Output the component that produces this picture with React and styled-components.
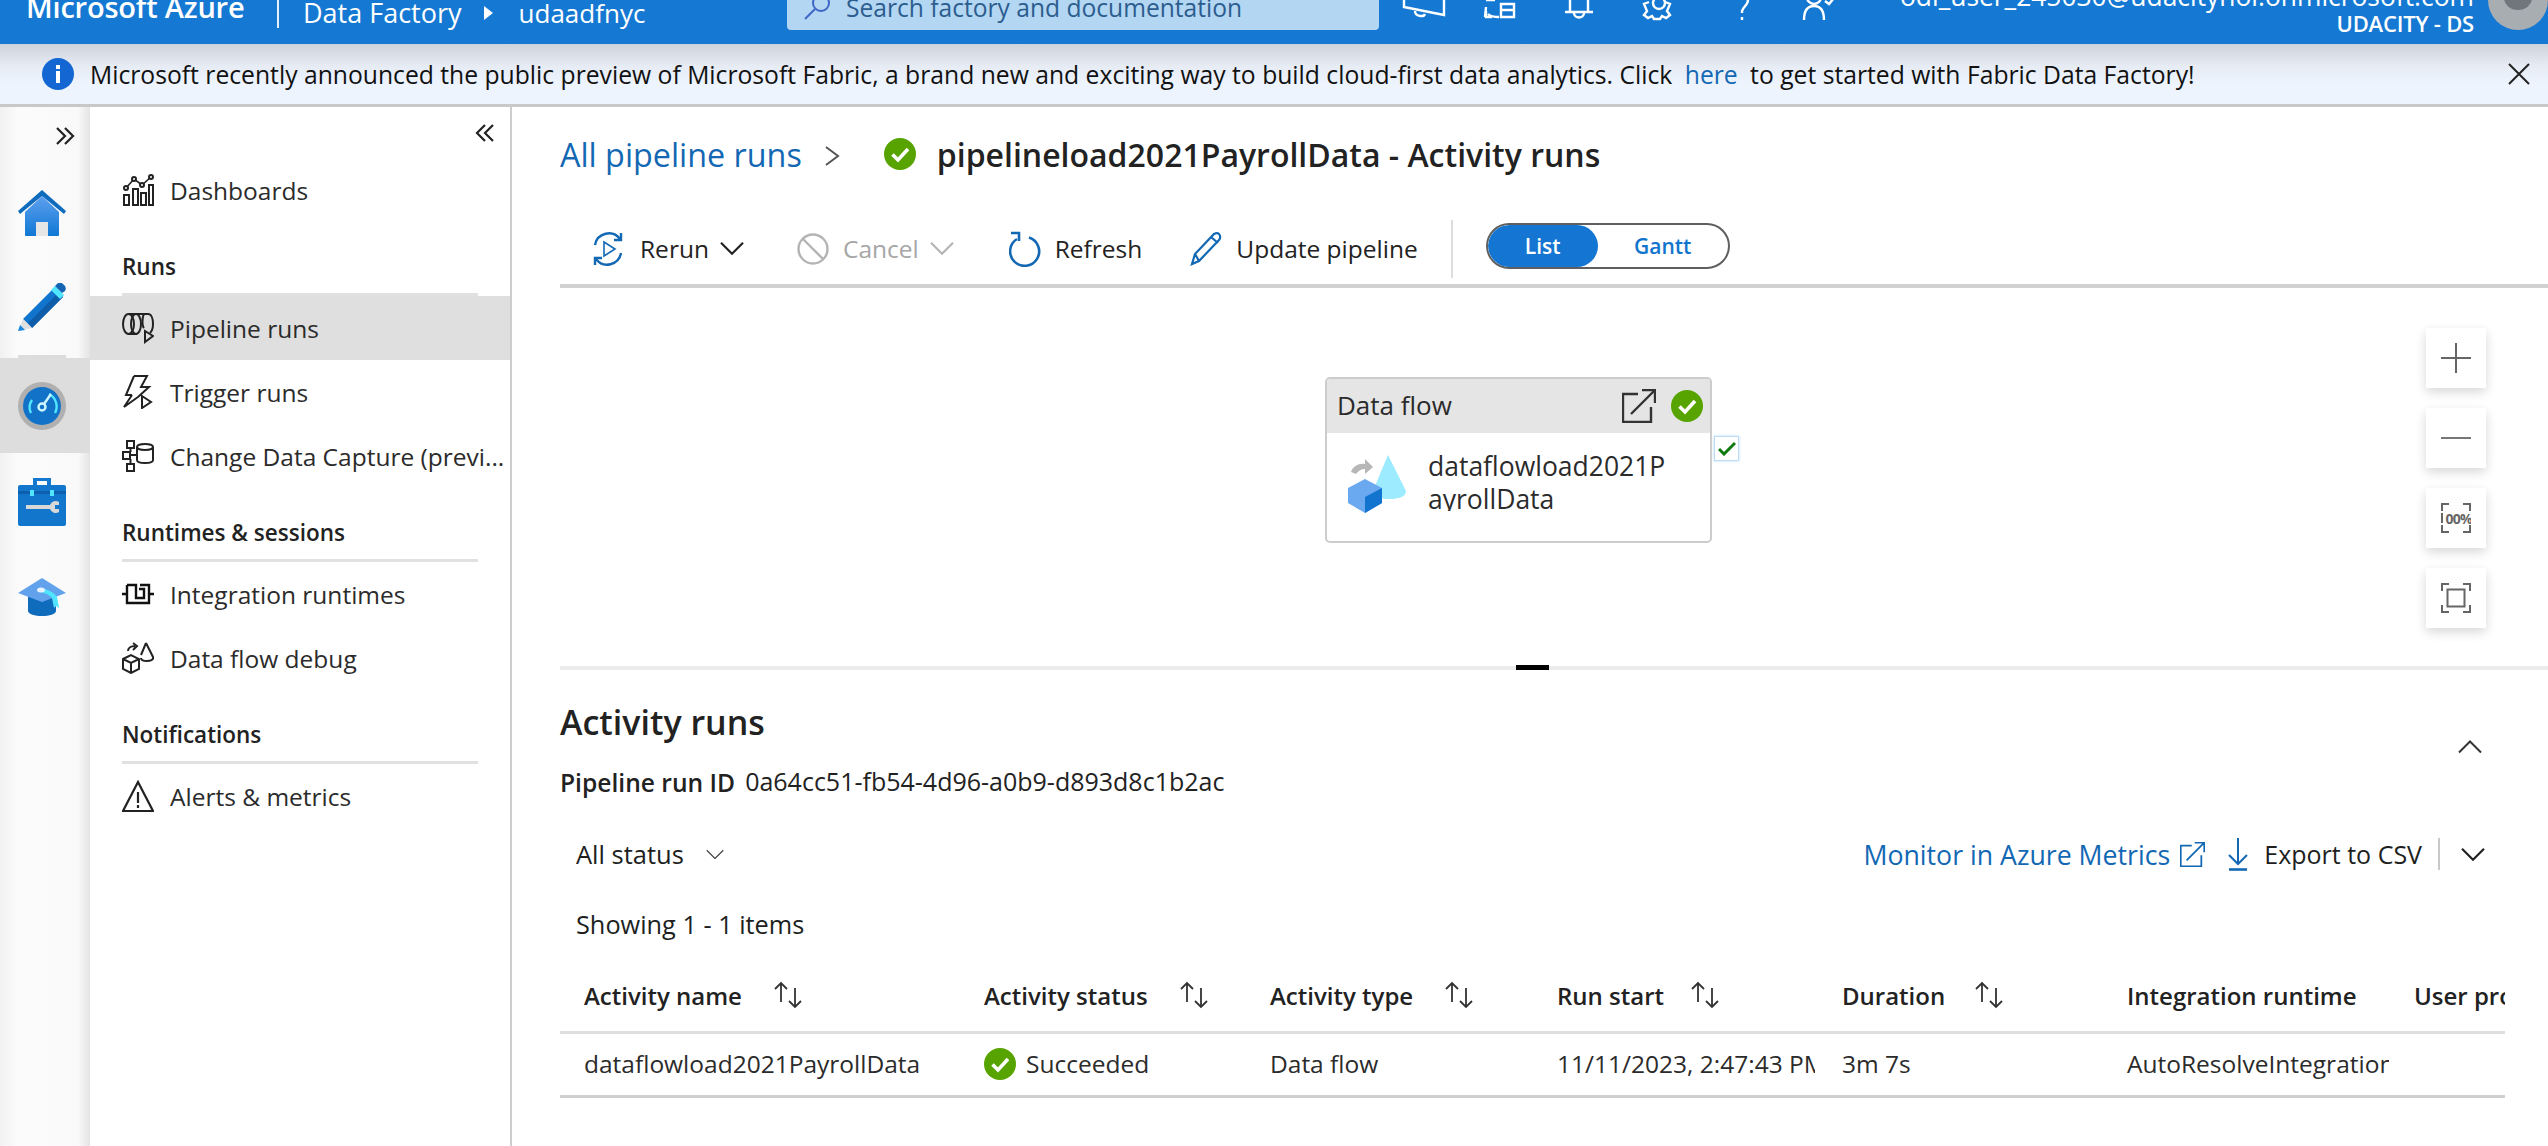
import React from 'react';
import styled, { createGlobalStyle } from 'styled-components';

const GlobalStyle = createGlobalStyle`
    html, body {
        margin: 0;
        padding: 0;
        background: #fff;
    }
    * {
        box-sizing: border-box;
    }
    body {
        font-family: 'Open Sans', 'Noto Sans', sans-serif;
        color: #201f1e;
    }
`;

const Page = styled.div`
    width: 2548px;
    height: 1146px;
    display: flex;
    flex-direction: column;
    overflow: hidden;
`;

const Header = styled.header`
    height: 44px;
    flex: none;
    background: #1579d3;
    overflow: hidden;
    color: #fff;
`;

const HeaderRow = styled.div`
    height: 60px;
    margin-top: -30px;
    display: flex;
    align-items: center;
`;

const Brand = styled.div`
    width: 277px;
    padding: 12px 0 0 26px;
    font-size: 29px;
    font-weight: 600;
    letter-spacing: -0.2px;
    white-space: nowrap;
`;

const HeaderCrumb = styled.div`
    height: 56px;
    width: 510px;
    border-left: 2px solid #e6f0fa;
    padding: 26px 0 0 24px;
    display: flex;
    align-items: center;
    font-size: 27px;
    line-height: 30px;
    white-space: nowrap;
`;

const CrumbArrow = styled.span`
    width: 0;
    height: 0;
    margin: 0 26px 0 22px;
    border-left: 9px solid #fff;
    border-top: 7px solid transparent;
    border-bottom: 7px solid transparent;
`;

const FactoryName = styled.span`
    font-size: 26px;
`;

const SearchBox = styled.div`
    width: 592px;
    height: 60px;
    background: #b3d6f2;
    border-radius: 0 0 4px 4px;
    padding: 14px 0 0 16px;
    display: flex;
    align-items: center;
    gap: 15px;
    color: #2c5d8f;
    font-size: 24.6px;
    white-space: nowrap;
`;

const HeaderIcons = styled.div`
    display: flex;
    align-items: center;
    margin-left: 24px;
    width: 480px;
`;

const HeaderIcon = styled.svg`
    flex: none;
    width: ${(p) => p.$w}px;
    height: 40px;
    margin-right: ${(p) => p.$gap}px;
    overflow: visible;
`;

const UserBlock = styled.div`
    flex: 1;
    height: 60px;
    display: flex;
    flex-direction: column;
    align-items: flex-end;
    font-size: 26.4px;
    line-height: 30px;
    padding-top: 11px;
    white-space: nowrap;
`;

const Tenant = styled.div`
    font-size: 22px;
    font-weight: 600;
    line-height: 24px;
    letter-spacing: -0.2px;
`;

const Avatar = styled.div`
    flex: none;
    width: 60px;
    height: 60px;
    margin-left: 14px;
    border-radius: 50%;
    background: #a8adb2;
    position: relative;
    overflow: hidden;

    &::before {
        content: '';
        position: absolute;
        left: 16px;
        top: 16px;
        width: 28px;
        height: 24px;
        border-radius: 50%;
        background: #70767b;
    }
`;

const Banner = styled.div`
    height: 63px;
    flex: none;
    border-bottom: 3px solid #c8c8c8;
    background: linear-gradient(#ced2db 0, #e6ebf4 22px, #eef4fe 40px);
    display: flex;
    align-items: center;
    padding: 0 0 0 42px;
    font-size: 24.7px;
    color: #111;
    white-space: nowrap;
`;

const BannerText = styled.div`
    margin-left: 16px;
    flex: 1;
`;

const BannerLink = styled.span`
    color: #1368b4;
    margin: 0 6px;
`;

const CloseIcon = styled.svg`
    margin-right: 18px;
`;

const Body = styled.div`
    flex: 1;
    display: flex;
    min-height: 0;
`;

const Rail = styled.nav`
    width: 90px;
    flex: none;
    background: linear-gradient(90deg, #f1f1f1 0, #fbfbfb 18px, #f9f9f9 78px, #e4e4e4 90px);
    display: flex;
    flex-direction: column;
`;

const RailToggle = styled.div`
    height: 58px;
    display: flex;
    align-items: center;
    justify-content: flex-end;
    padding-right: 15px;
`;

const RailItem = styled.div`
    height: ${(p) => p.$h || 95}px;
    padding-right: 6px;
    display: flex;
    align-items: center;
    justify-content: center;
    background: ${(p) => (p.$active ? '#dddddd' : 'transparent')};
`;

const RailRule = styled.div`
    height: 3px;
    margin: 0 24px 0 18px;
    background: #dcdcdc;
`;

const Side = styled.aside`
    width: 422px;
    flex: none;
    border-right: 2px solid #cdcdcd;
    display: flex;
    flex-direction: column;
`;

const SideCollapse = styled.div`
    height: 51px;
    display: flex;
    align-items: center;
    justify-content: flex-end;
    padding-right: 15px;
`;

const SideRow = styled.div`
    height: 64px;
    display: flex;
    align-items: center;
    padding-left: 32px;
    gap: 16px;
    font-size: 24.5px;
    color: #2b2b2b;
    white-space: nowrap;
    overflow: hidden;
    background: ${(p) => (p.$active ? '#dfdfdf' : 'transparent')};
`;

const SideHead = styled.div`
    height: 74px;
    flex: none;
    margin: 0 32px;
    width: 356px;
    padding: 0 0 11px 0;
    border-bottom: 3px solid #e1e1e1;
    display: flex;
    align-items: flex-end;
    font-size: 22.5px;
    font-weight: 600;
    color: #222;
`;

const Main = styled.main`
    flex: 1;
    min-width: 0;
    padding-left: 48px;
    display: flex;
    flex-direction: column;
`;

const Crumbs = styled.div`
    height: 110px;
    flex: none;
    padding-bottom: 16px;
    display: flex;
    align-items: center;
    font-size: 32.3px;
    white-space: nowrap;
`;

const CrumbLink = styled.span`
    color: #1368b4;
`;

const CrumbSep = styled.svg`
    width: 18px;
    height: 22px;
    margin: 4px 43px 0 21px;
`;

const CrumbTitle = styled.span`
    margin-left: 21px;
    font-size: 32px;
    font-weight: 600;
    color: #222;
`;

const Toolbar = styled.div`
    height: 71px;
    flex: none;
    border-bottom: 4px solid #d2d2d2;
    display: flex;
    align-items: center;
    padding: 0 0 4px 30px;
    font-size: 24.5px;
    white-space: nowrap;
`;

const Tool = styled.div`
    display: flex;
    align-items: center;
    gap: 14px;
    margin-right: ${(p) => p.$gap}px;
    color: ${(p) => (p.$disabled ? '#a6a6a6' : '#222')};

    svg:last-child:not(:first-child) {
        margin-left: -3px;
    }
`;

const ToolRule = styled.div`
    width: 2px;
    height: 58px;
    background: #dedede;
    margin-right: 33px;
`;

const Toggle = styled.div`
    width: 244px;
    height: 46px;
    margin-top: -6px;
    border: 2px solid #5f5f5f;
    border-radius: 23px;
    display: flex;
    font-size: 21px;
    font-weight: 600;
    overflow: hidden;
`;

const ToggleOption = styled.div`
    width: ${(p) => p.$w}px;
    display: flex;
    align-items: center;
    justify-content: center;
    color: ${(p) => (p.$active ? '#fff' : '#1275cd')};
    background: ${(p) => (p.$active ? '#1476d2' : 'transparent')};
    border-radius: 23px;
`;

const Canvas = styled.div`
    height: 378px;
    flex: none;
    position: relative;
`;

const Node = styled.div`
    position: absolute;
    left: 765px;
    top: 89px;
    width: 387px;
    height: 166px;
    border: 2px solid #cccccc;
    border-radius: 5px;
    display: flex;
    flex-direction: column;
    overflow: hidden;
`;

const NodeHead = styled.div`
    height: 54px;
    flex: none;
    background: #e5e5e5;
    display: flex;
    align-items: center;
    gap: 15px;
    padding: 0 7px 0 10px;
    font-size: 26px;
    color: #2b2b2b;
`;

const NodeName = styled.div`
    flex: 1;
    margin-top: -2px;
`;

const NodeBody = styled.div`
    display: flex;
    padding: 22px 0 0 20px;
`;

const NodeText = styled.div`
    margin: -5px 0 0 21px;
    width: 240px;
    height: 61px;
    overflow: hidden;
    font-size: 26.5px;
    line-height: 33px;
    word-break: break-all;
    color: #2b2b2b;
`;

const NodeCheck = styled.div`
    position: absolute;
    left: 1154px;
    top: 148px;
    width: 25px;
    height: 25px;
    background: #fff;
    border: 1px solid #bcdcf5;
    box-shadow: 0 0 3px #bcdcf5;
    display: flex;
    align-items: center;
    justify-content: center;
`;

const ZoomStack = styled.div`
    position: absolute;
    top: 40px;
    right: 62px;
    display: flex;
    flex-direction: column;
    gap: 20px;
`;

const ZoomButton = styled.div`
    width: 60px;
    height: 60px;
    background: #fff;
    box-shadow: 0 4px 10px rgba(0, 0, 0, 0.16);
    display: flex;
    align-items: center;
    justify-content: center;
`;

const Splitter = styled.div`
    height: 4px;
    flex: none;
    background: #ececec;
    position: relative;
`;

const SplitHandle = styled.div`
    position: absolute;
    left: 956px;
    top: -1px;
    width: 33px;
    height: 5px;
    background: #000;
`;

const TitleRow = styled.div`
    height: 85px;
    flex: none;
    display: flex;
    align-items: flex-end;
    justify-content: space-between;
    padding-right: 66px;
`;

const SectionTitle = styled.h2`
    margin: 0 0 11px;
    font-size: 34px;
    line-height: 44px;
    font-weight: 600;
    color: #222;
`;

const CollapseUp = styled.svg`
    margin-bottom: 1px;
`;

const RunIdRow = styled.div`
    height: 54px;
    flex: none;
    display: flex;
    align-items: center;
    font-size: 24.6px;
    color: #222;
`;

const RunIdLabel = styled.span`
    font-weight: 600;
    margin-right: 10px;
`;

const RunIdValue = styled.span`
    font-size: 25px;
    margin-top: -3px;
`;

const FilterRow = styled.div`
    height: 70px;
    margin-top: 10px;
    flex: none;
    display: flex;
    align-items: center;
    padding: 0 63px 0 16px;
    font-size: 25.5px;
`;

const StatusFilter = styled.div`
    display: flex;
    align-items: center;
    gap: 22px;
    flex: 1;
`;

const MetricsLink = styled.div`
    display: flex;
    align-items: center;
    gap: 10px;
    color: #1368b4;
    font-size: 26.7px;
    margin-right: 23px;
`;

const ExportButton = styled.div`
    display: flex;
    align-items: center;
    gap: 16px;
    font-size: 25px;
`;

const FilterRule = styled.div`
    width: 2px;
    height: 32px;
    background: #c8c8c8;
    margin: 0 21px 0 16px;
`;

const ShowingRow = styled.div`
    height: 70px;
    flex: none;
    display: flex;
    align-items: center;
    padding-left: 16px;
    font-size: 25.3px;
`;

const Table = styled.div`
    width: 1945px;
    flex: none;
    font-size: 24.5px;
`;

const TableHead = styled.div`
    height: 75px;
    display: grid;
    grid-template-columns: 400px 286px 287px 285px 285px 287px 115px;
    align-items: center;
    border-bottom: 3px solid #dedede;
    font-size: 24px;
    font-weight: 600;
    color: #222;
`;

const TableRow = styled.div`
    height: 64px;
    padding-bottom: 2px;
    display: grid;
    grid-template-columns: 400px 286px 287px 285px 285px 287px 115px;
    align-items: center;
    border-bottom: 3px solid #cfcfcf;
`;

const HeadCell = styled.div`
    display: flex;
    align-items: center;
    gap: ${(p) => p.$gap || 31}px;
    padding-left: 24px;
    overflow: hidden;
    white-space: nowrap;
`;

const Cell = styled.div`
    display: flex;
    align-items: center;
    gap: 10px;
    padding-left: 24px;
    overflow: hidden;
    white-space: nowrap;
    color: #2b2b2b;
    clip-path: inset(0 ${(p) => p.$clip || 0}px 0 0);
`;

const Chevron = ({ size = 24, color = '#222', dir = 'down', w = 2.2 }) => (
    <svg width={size} height={size * 0.6} viewBox="0 0 24 14" fill="none">
        <path
            d={dir === 'down' ? 'M1 1.5 12 12.5 23 1.5' : 'M1 12.5 12 1.5 23 12.5'}
            stroke={color}
            strokeWidth={w}
        />
    </svg>
);

const CheckCircle = ({ size = 32 }) => (
    <svg width={size} height={size} viewBox="0 0 32 32">
        <circle cx="16" cy="16" r="16" fill="#57a300" />
        <path d="M8.5 16.5 14 22 24 11" fill="none" stroke="#fff" strokeWidth="3.6" />
    </svg>
);

const SortIcon = () => (
    <svg width="30" height="30" viewBox="0 0 30 30" fill="none" stroke="#333" strokeWidth="1.8">
        <path d="M8 22V3M2 9l6-6 6 6M22 8v19M16 21l6 6 6-6" />
    </svg>
);

const DoubleChevron = ({ dir }) => (
    <svg width="20" height="20" viewBox="0 0 20 20" fill="none" stroke="#222" strokeWidth="2.2">
        <path d={dir === 'right' ? 'M2 2l8 8-8 8M10 2l8 8-8 8' : 'M18 2l-8 8 8 8M10 2l-8 8 8 8'} />
    </svg>
);

const ExternalIcon = ({ size, color, w }) => (
    <svg width={size} height={size} viewBox="0 0 34 34" fill="none" stroke={color} strokeWidth={w}>
        <path d="M16 5H1v28h28V18M9 25 32 2M20 1h13v13" />
    </svg>
);

const DashboardsIcon = () => (
    <svg width="32" height="32" viewBox="0 0 32 32" fill="none" stroke="#222" strokeWidth="2">
        <path d="M2 21h5v10H2zM11 15h5v16h-5zM19 19h5v12h-5zM27 11h4v20h-4z" />
        <path d="M4 14 12 5l8 6 9-8" strokeWidth="1.6" />
        <circle cx="4" cy="14" r="2" fill="#fff" />
        <circle cx="12" cy="5" r="2" fill="#fff" />
        <circle cx="20" cy="11" r="2" fill="#fff" />
        <circle cx="29" cy="3" r="2" fill="#fff" />
    </svg>
);

const PipelineIcon = () => (
    <svg width="32" height="32" viewBox="0 0 32 32" fill="none" stroke="#222" strokeWidth="2">
        <ellipse cx="6.5" cy="12" rx="5.5" ry="10" />
        <path d="M7 2h19c3 0 5 4 5 10 0 4-1 7-3 9M7 22h8" />
        <ellipse cx="14" cy="12" rx="5" ry="10" />
        <path d="M22 2c-2 3-2 12 0 14M23 19l8 5-8 6z" />
    </svg>
);

const TriggerIcon = () => (
    <svg width="32" height="34" viewBox="0 0 32 34" fill="none" stroke="#222" strokeWidth="2">
        <path d="M12 1h13l-6 11h8L16 22M10 20H4L12 1M10 20 2 32 16 22" />
        <path d="M20 21l9 6-9 6z" />
    </svg>
);

const CaptureIcon = () => (
    <svg width="32" height="32" viewBox="0 0 32 32" fill="none" stroke="#222" strokeWidth="2">
        <path d="M5 1h7v7H5zM1 12h7v7H1zM5 24h7v7H5zM8 15h8M8.500 8v4M8.500 19v5" />
        <ellipse cx="23" cy="7" rx="8" ry="3" />
        <path d="M15 7v13c0 2 3 3 8 3s8-1 8-3V7" />
    </svg>
);

const IntegrationIcon = () => (
    <svg width="32" height="22" viewBox="0 0 32 22" fill="none" stroke="#111" strokeWidth="2.4">
        <path d="M0 11h5M27 11h5M5 2h9v13h8V6h-5M18 2h9v18H5V2" />
    </svg>
);

const DebugIcon = () => (
    <svg width="32" height="32" viewBox="0 0 32 32" fill="none" stroke="#222" strokeWidth="2">
        <path d="M1 17l8-4 8 4v10l-8 4-8-4zM1 17l8 4 8-4M9 21v10" />
        <path d="M6 9c0-3 3-5 7-5M11 1l4 3-4 4" />
        <path d="M24 1l7 14c1 3-3 4-6 4s-6-1-6-3" />
        <path d="M24 1l-5 12" />
    </svg>
);

const AlertIcon = () => (
    <svg width="32" height="32" viewBox="0 0 32 32" fill="none" stroke="#222" strokeWidth="2.2">
        <path d="M16 2 1 31h30z" />
        <path d="M16 12v11M16 25v3" />
    </svg>
);

const HomeIcon = () => (
    <svg width="48" height="46" viewBox="0 0 48 46">
        <defs>
            <linearGradient id="homeFill" x1="0" y1="0" x2="0" y2="1">
                <stop offset="0" stopColor="#5ea0ef" />
                <stop offset="1" stopColor="#0f78d4" />
            </linearGradient>
        </defs>
        <path d="M7 22 24 6l17 16v23a1 1 0 0 1-1 1H8a1 1 0 0 1-1-1z" fill="url(#homeFill)" />
        <path d="M0 21 24 0l24 21-2 3L24 6 2 24z" fill="#0f6cbd" />
        <path d="M18 32h12v14H18z" fill="#e6e6e6" />
    </svg>
);

const PencilIcon = () => (
    <svg width="48" height="50" viewBox="0 0 48 50">
        <path d="M5 36 36 5l9 9-31 31z" fill="#1275cd" />
        <path d="M10 40 41 9l4 5-31 31z" fill="#0e5da8" />
        <path d="M33 7l4-4 9 9-4 4z" fill="#50e6ff" />
        <path d="M37 3l3-3c2-1 3-1 5 1l2 2c1 2 1 3 0 5l-3 2z" fill="#1464b4" />
        <path d="M5 36 14 45 0 48z" fill="#e0e0e0" />
        <path d="M2 42 7 47 0 48z" fill="#1b86e0" />
    </svg>
);

const MonitorIcon = () => (
    <svg width="48" height="48" viewBox="0 0 48 48" fill="none">
        <circle cx="24" cy="24" r="24" fill="#b0b0b0" />
        <circle cx="24" cy="24" r="19" fill="#1272c7" />
        <path d="M13 31a13 13 0 0 1 1-13M31 12a14 14 0 0 1 6 19" stroke="#50e6ff" strokeWidth="2.4" />
        <circle cx="24" cy="25" r="3.500" stroke="#cdf6ff" strokeWidth="2.4" />
        <path d="M26 22l7-10" stroke="#cdf6ff" strokeWidth="2.4" />
    </svg>
);

const ToolboxIcon = () => (
    <svg width="48" height="49" viewBox="0 0 48 49">
        <path d="M15 1h18v8h-4V4H19v5h-4z" fill="#1478d0" />
        <path d="M0 10a2 2 0 0 1 2-2h44a2 2 0 0 1 2 2v37a2 2 0 0 1-2 2H2a2 2 0 0 1-2-2z" fill="#1276cc" />
        <path d="M0 14h48v3H0z" fill="#0e5fae" />
        <path d="M12 13h4v6h-4zM32 13h4v6h-4z" fill="#50e6ff" />
        <path d="M8 28h24a6 6 0 0 1 9-3v3h-4v4h4v3a6 6 0 0 1-9-3H8z" fill="#d8d8d8" />
    </svg>
);

const CapIcon = () => (
    <svg width="48" height="38" viewBox="0 0 48 38">
        <path d="M10 16v17c0 3 7 5 14 5s14-2 14-5V16z" fill="#0f6cbd" />
        <path d="M0 15 24 0l24 15-24 9z" fill="#62a2ec" />
        <path d="M20 11c5-2 15 2 19 8l2 11-3-2-2 2-2-10c-3-4-10-6-14-6z" fill="#50e6ff" />
        <ellipse cx="23" cy="12" rx="4" ry="2.500" fill="#e6f3ff" />
    </svg>
);

const RerunIcon = () => (
    <svg width="36" height="36" viewBox="0 0 36 36" fill="none" stroke="#1368b4" strokeWidth="2.4">
        <path d="M5 14a14 14 0 0 1 25-6M31 22a14 14 0 0 1-25 6" />
        <path d="M31 2v7h-7M5 34v-7h7" />
        <path d="M14 11l11 7-11 7z" strokeWidth="1.600" />
    </svg>
);

const CancelIcon = () => (
    <svg width="32" height="32" viewBox="0 0 32 32" fill="none" stroke="#b4b4b4" strokeWidth="2.4">
        <circle cx="16" cy="16" r="14.500" />
        <path d="M6 6l20 20" />
    </svg>
);

const RefreshIcon = () => (
    <svg width="32" height="36" viewBox="0 0 32 36" fill="none" stroke="#1368b4" strokeWidth="2.6">
        <path d="M20 6.500A14.500 14.500 0 1 1 8 8" />
        <path d="M2 2h8v8" />
    </svg>
);

const EditIcon = () => (
    <svg width="32" height="34" viewBox="0 0 32 34" fill="none" stroke="#1368b4" strokeWidth="2.2">
        <path d="M2 32l3-10L24 2c2-1 4-1 5 0s2 4 0 6L9 29zM5 22l4 7M21 5l7 6" />
    </svg>
);

const SearchIcon = () => (
    <svg width="28" height="28" viewBox="0 0 28 28" fill="none" stroke="#3f66c4" strokeWidth="2">
        <circle cx="18" cy="10" r="8" />
        <path d="M12 16 2 26" />
    </svg>
);

const DataFlowIcon = () => (
    <svg width="60" height="58" viewBox="0 0 60 58">
        <path d="M41 0 59 36c0 6-8 8-16 8s-16-2-18-6z" fill="#9cebff" />
        <path d="M4 17c2-6 8-9 14-8V4l8 8-8 7v-5c-4 0-7 2-9 5z" fill="#b7b7b7" />
        <path d="M1 33 18 24l17 9v15L18 58 1 48z" fill="#6aa8f0" />
        <path d="M18 42 35 33v15L18 58z" fill="#1274cf" />
    </svg>
);

const DownloadIcon = () => (
    <svg width="20" height="33" viewBox="0 0 20 33" fill="none" stroke="#1368b4" strokeWidth="2">
        <path d="M10 0v26M1 17l9 9 9-9" />
        <path d="M1 31.500h18" strokeWidth="2.600" />
    </svg>
);

const columns = [
    { name: 'Activity name', sort: true },
    { name: 'Activity status', sort: true },
    { name: 'Activity type', sort: true },
    { name: 'Run start', sort: true, gap: 26 },
    { name: 'Duration', sort: true, gap: 29 },
    { name: 'Integration runtime' },
    { name: 'User properties' },
];

export default function App() {
    return (
        <Page>
            <GlobalStyle />
            <Header>
                <HeaderRow>
                    <Brand>Microsoft Azure</Brand>
                    <HeaderCrumb>
                        Data Factory
                        <CrumbArrow />
                        <FactoryName>udaadfnyc</FactoryName>
                    </HeaderCrumb>
                    <SearchBox>
                        <SearchIcon />
                        Search factory and documentation
                    </SearchBox>
                    <HeaderIcons>
                        <HeaderIcon $w={42} $gap={38} viewBox="0 0 42 40" fill="none" stroke="#fff" strokeWidth="2.4">
                            <path d="M1 27l40 8V5L1 13zM12 31c0 6 9 6 10 3" />
                        </HeaderIcon>
                        <HeaderIcon $w={32} $gap={50} viewBox="0 0 32 40" fill="none" stroke="#fff" strokeWidth="2.4">
                            <path d="M3 20h9M3 27l-1 10M18 24h13v13H18zM18 30h13M16 37c-4 0-8 0-11-3M3 31v6h6" />
                        </HeaderIcon>
                        <HeaderIcon $w={28} $gap={50} viewBox="0 0 28 40" fill="none" stroke="#fff" strokeWidth="2.4">
                            <path d="M5 10v22H0h28H23V10M9 33c0 6 10 6 10 0" />
                        </HeaderIcon>
                        <HeaderIcon $w={32} $gap={62} viewBox="0 0 32 40" fill="none" stroke="#fff" strokeWidth="2.4">
                            <path d="M6 22l-5 2 3 7-3 4 4 3 4-2 2 3h6l2-3 4 2 4-3-3-4 3-7-5-2" />
                            <circle cx="16" cy="23" r="6" />
                        </HeaderIcon>
                        <HeaderIcon $w={12} $gap={54} viewBox="0 0 12 40" fill="none" stroke="#fff" strokeWidth="2.4">
                            <path d="M11 20c0 5-5 7-6 11v2M5 37v3" />
                        </HeaderIcon>
                        <HeaderIcon $w={32} $gap={0} viewBox="0 0 32 40" fill="none" stroke="#fff" strokeWidth="2.4">
                            <circle cx="11" cy="17" r="7" />
                            <path d="M1 40c0-10 4-14 10-14s10 4 10 14M22 21l4 3 5-6" />
                        </HeaderIcon>
                    </HeaderIcons>
                    <UserBlock>
                        <div>odl_user_245030@udacityhol.onmicrosoft.com</div>
                        <Tenant>UDACITY - DS</Tenant>
                    </UserBlock>
                    <Avatar />
                </HeaderRow>
            </Header>
            <Banner>
                <svg width="32" height="32" viewBox="0 0 32 32">
                    <circle cx="16" cy="16" r="16" fill="#1466d2" />
                    <path d="M14 13h4v12h-4zM14 7h4v4h-4z" fill="#fff" />
                </svg>
                <BannerText>
                    Microsoft recently announced the public preview of Microsoft Fabric, a brand new and
                    exciting way to build cloud-first data analytics. Click
                    <BannerLink> here </BannerLink>
                    to get started with Fabric Data Factory!
                </BannerText>
                <CloseIcon width="22" height="22" viewBox="0 0 22 22" stroke="#222" strokeWidth="2">
                    <path d="M1 1l20 20M21 1 1 21" />
                </CloseIcon>
            </Banner>
            <Body>
                <Rail>
                    <RailToggle>
                        <DoubleChevron dir="right" />
                    </RailToggle>
                    <RailItem><HomeIcon /></RailItem>
                    <RailItem><PencilIcon /></RailItem>
                    <RailRule />
                    <RailItem $active><MonitorIcon /></RailItem>
                    <RailItem $h={96}><ToolboxIcon /></RailItem>
                    <RailItem $h={96}><CapIcon /></RailItem>
                </Rail>
                <Side>
                    <SideCollapse>
                        <DoubleChevron dir="left" />
                    </SideCollapse>
                    <SideRow><DashboardsIcon />Dashboards</SideRow>
                    <SideHead>Runs</SideHead>
                    <SideRow $active><PipelineIcon />Pipeline runs</SideRow>
                    <SideRow><TriggerIcon />Trigger runs</SideRow>
                    <SideRow><CaptureIcon />Change Data Capture (previ...</SideRow>
                    <SideHead>Runtimes &amp; sessions</SideHead>
                    <SideRow><IntegrationIcon />Integration runtimes</SideRow>
                    <SideRow><DebugIcon />Data flow debug</SideRow>
                    <SideHead>Notifications</SideHead>
                    <SideRow><AlertIcon />Alerts &amp; metrics</SideRow>
                </Side>
                <Main>
                    <Crumbs>
                        <CrumbLink>All pipeline runs</CrumbLink>
                        <CrumbSep viewBox="0 0 18 22" fill="none" stroke="#555" strokeWidth="2">
                            <path d="M3 2l12 9-12 9" />
                        </CrumbSep>
                        <CheckCircle />
                        <CrumbTitle>pipelineload2021PayrollData - Activity runs</CrumbTitle>
                    </Crumbs>
                    <Toolbar>
                        <Tool $gap={53}><RerunIcon />Rerun<Chevron /></Tool>
                        <Tool $gap={55} $disabled><CancelIcon />Cancel<Chevron color="#b4b4b4" /></Tool>
                        <Tool $gap={48}><RefreshIcon />Refresh</Tool>
                        <Tool $gap={33}><EditIcon />Update pipeline</Tool>
                        <ToolRule />
                        <Toggle>
                            <ToggleOption $active $w={110}>List</ToggleOption>
                            <ToggleOption $w={130}>Gantt</ToggleOption>
                        </Toggle>
                    </Toolbar>
                    <Canvas>
                        <Node>
                            <NodeHead>
                                <NodeName>Data flow</NodeName>
                                <ExternalIcon size={34} color="#333" w={2.4} />
                                <CheckCircle />
                            </NodeHead>
                            <NodeBody>
                                <DataFlowIcon />
                                <NodeText>dataflowload2021PayrollData</NodeText>
                            </NodeBody>
                        </Node>
                        <NodeCheck>
                            <svg width="18" height="15" viewBox="0 0 18 15" fill="none" stroke="#107c10" strokeWidth="3">
                                <path d="M1 8l5 5L17 2" />
                            </svg>
                        </NodeCheck>
                        <ZoomStack>
                            <ZoomButton>
                                <svg width="30" height="30" viewBox="0 0 30 30" stroke="#666" strokeWidth="2">
                                    <path d="M0 15h30M15 0v30" />
                                </svg>
                            </ZoomButton>
                            <ZoomButton>
                                <svg width="30" height="4" viewBox="0 0 30 4" stroke="#777" strokeWidth="2">
                                    <path d="M0 2h30" />
                                </svg>
                            </ZoomButton>
                            <ZoomButton>
                                <svg width="30" height="30" viewBox="0 0 30 30" fill="none" stroke="#666" strokeWidth="2">
                                    <path d="M8 1H1v7M22 1h7v7M8 29H1v-7M22 29h7v-7" />
                                    <text x="4.500" y="20.500" fontSize="14" fontWeight="700" letterSpacing="-0.8" fill="#666" stroke="none" fontFamily="Open Sans">00%</text>
                                    <path d="M1 10v10" />
                                </svg>
                            </ZoomButton>
                            <ZoomButton>
                                <svg width="30" height="30" viewBox="0 0 30 30" fill="none" stroke="#666" strokeWidth="2">
                                    <path d="M8 1H1v7M22 1h7v7M8 29H1v-7M22 29h7v-7M6.500 6.500h17v17h-17z" />
                                </svg>
                            </ZoomButton>
                        </ZoomStack>
                    </Canvas>
                    <Splitter><SplitHandle /></Splitter>
                    <TitleRow>
                        <SectionTitle>Activity runs</SectionTitle>
                        <CollapseUp width="24" height="14" viewBox="0 0 24 14" fill="none" stroke="#333" strokeWidth="2">
                            <path d="M1 12.500 12 1.500 23 12.500" />
                        </CollapseUp>
                    </TitleRow>
                    <RunIdRow>
                        <RunIdLabel>Pipeline run ID</RunIdLabel>
                        <RunIdValue>0a64cc51-fb54-4d96-a0b9-d893d8c1b2ac</RunIdValue>
                    </RunIdRow>
                    <FilterRow>
                        <StatusFilter>
                            All status
                            <Chevron size={18} color="#444" w={1.6} />
                        </StatusFilter>
                        <MetricsLink>
                            Monitor in Azure Metrics
                            <ExternalIcon size={25} color="#1368b4" w={2.4} />
                        </MetricsLink>
                        <ExportButton>
                            <DownloadIcon />
                            Export to CSV
                        </ExportButton>
                        <FilterRule />
                        <Chevron size={24} />
                    </FilterRow>
                    <ShowingRow>Showing 1 - 1 items</ShowingRow>
                    <Table>
                        <TableHead>
                            {columns.map((col) => (
                                <HeadCell key={col.name} $gap={col.gap}>
                                    {col.name}
                                    {col.sort && <SortIcon />}
                                </HeadCell>
                            ))}
                        </TableHead>
                        <TableRow>
                            <Cell>dataflowload2021PayrollData</Cell>
                            <Cell><CheckCircle />Succeeded</Cell>
                            <Cell>Data flow</Cell>
                            <Cell $clip={3}>11/11/2023, 2:47:43 PM</Cell>
                            <Cell>3m 7s</Cell>
                            <Cell $clip={1}>AutoResolveIntegrationRuntime</Cell>
                            <Cell />
                        </TableRow>
                    </Table>
                </Main>
            </Body>
        </Page>
    );
}
